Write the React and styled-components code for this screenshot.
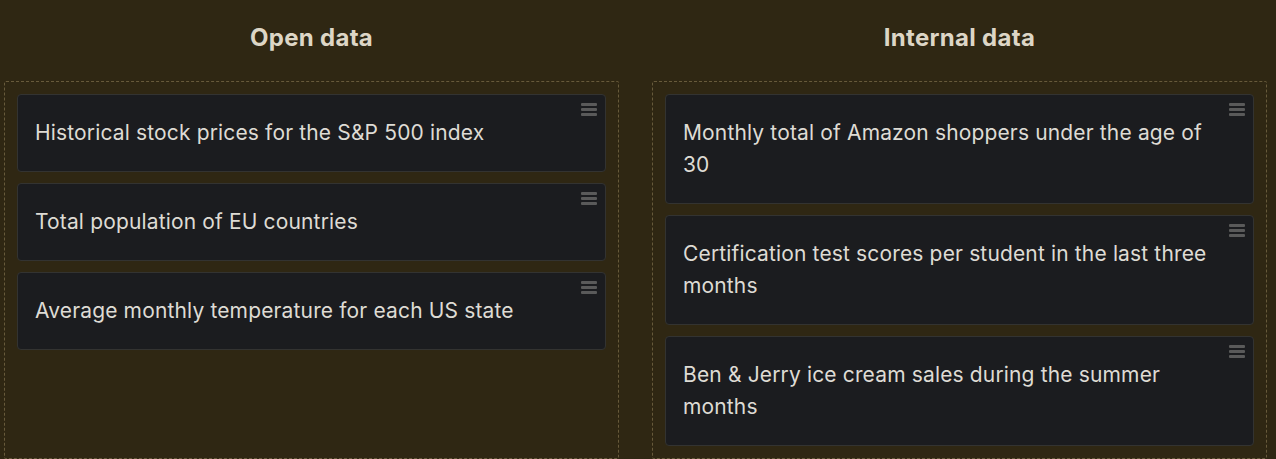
import React from "react";
import styled, { createGlobalStyle } from "styled-components";

const GlobalStyle = createGlobalStyle`
  html, body {
    margin: 0;
    padding: 0;
    background-color: #2f2713;
  }
  body {
    font-family: "Inter", "Noto Sans", sans-serif;
  }
`;

const columns = [
  {
    title: "Open data",
    items: [
      "Historical stock prices for the S&P 500 index",
      "Total population of EU countries",
      "Average monthly temperature for each US state",
    ],
  },
  {
    title: "Internal data",
    items: [
      "Monthly total of Amazon shoppers under the age of 30",
      "Certification test scores per student in the last three months",
      "Ben & Jerry ice cream sales during the summer months",
    ],
  },
];

const App = () => {
  return (
    <>
      <GlobalStyle />
      <Board>
        {columns.map((col) => (
          <Column key={col.title}>
            <Heading>{col.title}</Heading>
            <DropZone>
              {col.items.map((text) => (
                <Card key={text}>
                  <CardText>{text}</CardText>
                  <Handle>
                    <span />
                    <span />
                    <span />
                  </Handle>
                </Card>
              ))}
            </DropZone>
          </Column>
        ))}
      </Board>
    </>
  );
};

const Board = styled.div`
  display: grid;
  grid-template-columns: 615px 615px;
  column-gap: 33px;
  padding: 0 10px 0 4px;
`;

const Column = styled.div`
  display: flex;
  flex-direction: column;
`;

const Heading = styled.h2`
  margin: 0;
  padding-top: 24px;
  height: 81px;
  box-sizing: border-box;
  text-align: center;
  font-size: 24px;
  line-height: 28px;
  font-weight: 700;
  letter-spacing: 0.3px;
  color: #ddd6c6;
`;

const DropZone = styled.div`
  flex: 1;
  display: flex;
  flex-direction: column;
  gap: 11px;
  padding: 12px;
  border: 1px dashed #675a3b;
  border-radius: 2px;
`;

const Card = styled.div`
  position: relative;
  background-color: #1b1c1f;
  border: 1px solid #333331;
  border-radius: 4px;
  padding: 22px 30px 22px 17px;
`;

const CardText = styled.div`
  font-size: 21px;
  line-height: 32px;
  letter-spacing: 0.15px;
  color: #dedbd4;
`;

const Handle = styled.div`
  position: absolute;
  top: 8px;
  right: 8px;
  width: 16px;
  display: flex;
  flex-direction: column;
  gap: 2px;

  span {
    display: block;
    height: 3px;
    background-color: #5a5a5a;
    border-radius: 1px;
  }
`;

export default App;
